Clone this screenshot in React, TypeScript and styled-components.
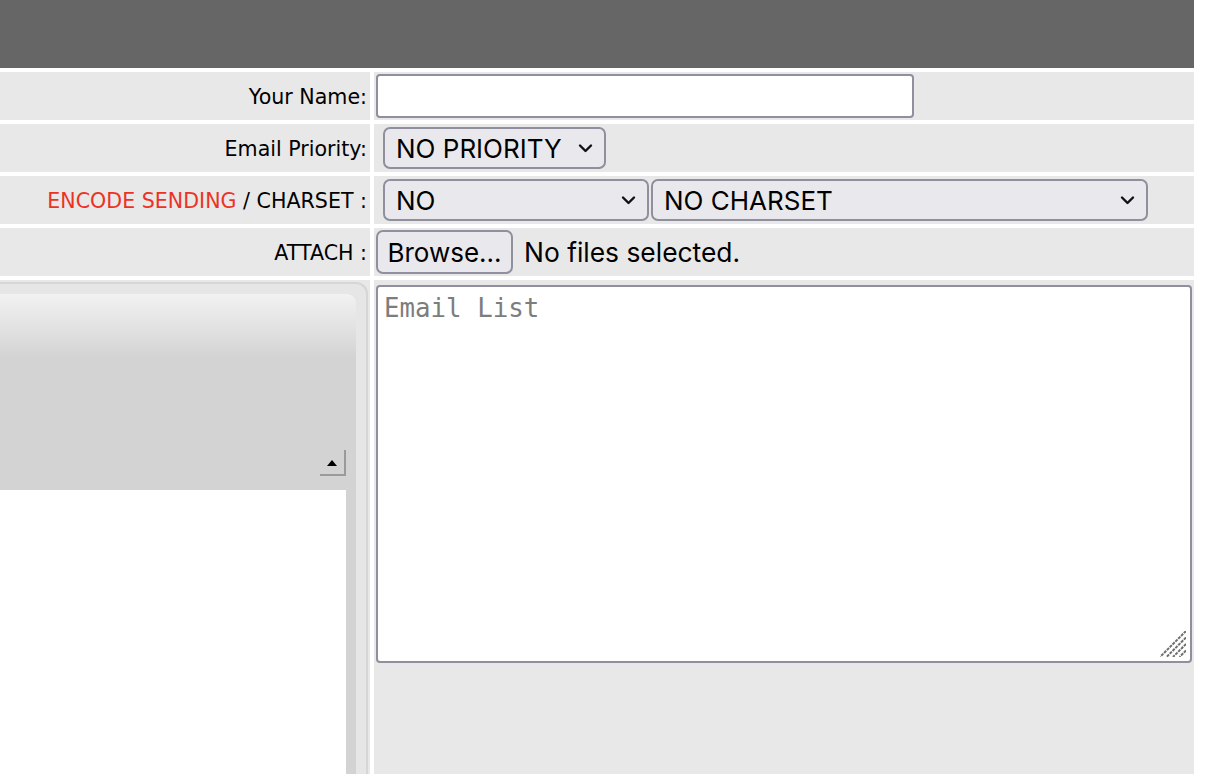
import React from 'react'
import styled, { createGlobalStyle } from 'styled-components'

const GlobalStyle = createGlobalStyle`
    html, body {
        margin: 0;
        padding: 0;
        background: #fff;
        overflow: hidden;
    }
    * {
        box-sizing: border-box;
    }
`

const Page = styled.div`
    width: 1194px;
    height: 774px;
    display: flex;
    flex-direction: column;
    background: #fff;
`

const TopBar = styled.div`
    height: 68px;
    flex-shrink: 0;
    background: #666;
`

const FormGrid = styled.div`
    flex: 1;
    display: grid;
    grid-template-columns: 370px 820px;
    grid-template-rows: 48px 48px 48px 48px 1fr;
    gap: 4px;
    padding-top: 4px;
    min-height: 0;
`

const LabelCell = styled.div`
    background: #e8e8e8;
    display: flex;
    align-items: center;
    justify-content: flex-end;
    padding: 2px 3px 0 0;
    font-family: "DejaVu Sans", Verdana, sans-serif;
    font-size: 20.6px;
    color: #000;
    white-space: nowrap;
`

const Accent = styled.span`
    color: #ec3323;
`

const FieldCell = styled.div<{ $pad?: number }>`
    background: #e8e8e8;
    display: flex;
    align-items: center;
    gap: 2px;
    padding-left: ${p => p.$pad ?? 2}px;
    font-family: Inter, "Liberation Sans", sans-serif;
    font-size: 26px;
    color: #000;
`

const TextInput = styled.input`
    width: 538px;
    height: 44px;
    border: 2px solid #8f8f9d;
    border-radius: 4px;
    background: #fff;
    outline: none;
    padding: 0 8px;
    font: inherit;
`

const SelectBox = styled.div<{ $width: number }>`
    width: ${p => p.$width}px;
    height: 42px;
    display: flex;
    align-items: center;
    justify-content: space-between;
    padding: 0 11px 0 11px;
    border: 2px solid #8f8f9d;
    border-radius: 7px;
    background: #e9e9ed;
    white-space: nowrap;
`

const FileButton = styled.button`
    height: 44px;
    width: 137px;
    border: 2px solid #8f8f9d;
    border-radius: 7px;
    background: #e9e9ed;
    font: inherit;
    color: #000;
    padding: 0;
`

const FileStatus = styled.span`
    margin-left: 9px;
    font-size: 26.4px;
`

const EditorCell = styled.div`
    background: #e8e8e8;
    display: flex;
    overflow: hidden;
`

const EditorFrame = styled.div`
    flex: 1;
    display: flex;
    flex-direction: column;
    margin: 2px 2px 0 -12px;
    padding: 10px 10px 0 0;
    border: 2px solid #d6d6d6;
    border-bottom: none;
    border-radius: 0 12px 0 0;
    background: #e6e6e6;
`

const EditorHeader = styled.div`
    height: 196px;
    flex-shrink: 0;
    display: flex;
    align-items: flex-end;
    justify-content: flex-end;
    padding: 0 10px 14px 0;
    border-radius: 0 9px 0 0;
    background: linear-gradient(#f2f2f2 0, #d3d3d3 64px, #d3d3d3 100%);
`

const ScrollUp = styled.div`
    width: 26px;
    height: 26px;
    display: flex;
    align-items: center;
    justify-content: center;
    border-right: 2px solid #9a9a9a;
    border-bottom: 2px solid #9a9a9a;
`

const EditorBody = styled.div`
    flex: 1;
    display: flex;
`

const EditorCanvas = styled.div`
    flex: 1;
    background: #fff;
`

const EditorRail = styled.div`
    width: 10px;
    background: #d3d3d3;
`

const ListCell = styled.div`
    background: #e8e8e8;
    padding: 5px 2px 0 2px;
`

const ListWrap = styled.div`
    position: relative;
    width: 816px;
    height: 378px;
`

const MailList = styled.textarea`
    width: 100%;
    height: 100%;
    border: 2px solid #8f8f9d;
    border-radius: 4px;
    padding: 6px 6px;
    resize: none;
    outline: none;
    background: #fff;
    font-family: "DejaVu Sans Mono", "Liberation Mono", monospace;
    font-size: 25.8px;
    &::placeholder {
        color: #7d7d7d;
    }
`

const Grip = styled.svg`
    position: absolute;
    right: 6px;
    bottom: 6px;
    pointer-events: none;
`

const Chevron = () => (
    <svg width="15" height="10" viewBox="0 0 15 10">
        <path d="M2 2.5 L7.5 8 L13 2.5" fill="none" stroke="#111" strokeWidth="2.4" strokeLinecap="round" strokeLinejoin="round" />
    </svg>
)

export default function App() {
    return (
        <Page>
            <GlobalStyle />
            <TopBar />
            <FormGrid>
                <LabelCell>Your Name:</LabelCell>
                <FieldCell>
                    <TextInput type="text" />
                </FieldCell>

                <LabelCell>Email Priority:</LabelCell>
                <FieldCell $pad={9}>
                    <SelectBox $width={223}>
                        <span>NO PRIORITY</span>
                        <Chevron />
                    </SelectBox>
                </FieldCell>

                <LabelCell>
                    <Accent>ENCODE SENDING</Accent>&nbsp;/ CHARSET :
                </LabelCell>
                <FieldCell $pad={9}>
                    <SelectBox $width={266}>
                        <span>NO</span>
                        <Chevron />
                    </SelectBox>
                    <SelectBox $width={497}>
                        <span>NO CHARSET</span>
                        <Chevron />
                    </SelectBox>
                </FieldCell>

                <LabelCell>ATTACH :</LabelCell>
                <FieldCell>
                    <FileButton type="button">Browse...</FileButton>
                    <FileStatus>No files selected.</FileStatus>
                </FieldCell>

                <EditorCell>
                    <EditorFrame>
                        <EditorHeader>
                            <ScrollUp>
                                <svg width="12" height="7" viewBox="0 0 12 7">
                                    <path d="M1 7 L6 1 L11 7 Z" fill="#000" />
                                </svg>
                            </ScrollUp>
                        </EditorHeader>
                        <EditorBody>
                            <EditorCanvas />
                            <EditorRail />
                        </EditorBody>
                    </EditorFrame>
                </EditorCell>
                <ListCell>
                    <ListWrap>
                        <MailList placeholder="Email List" />
                        <Grip width="26" height="26" viewBox="0 0 26 26">
                            <g stroke="#6f6f6f" strokeWidth="2" strokeDasharray="3 1">
                                <line x1="26" y1="0" x2="0" y2="26" />
                                <line x1="26" y1="6.5" x2="6.5" y2="26" />
                                <line x1="26" y1="13" x2="13" y2="26" />
                                <line x1="26" y1="19.5" x2="19.5" y2="26" />
                            </g>
                        </Grip>
                    </ListWrap>
                </ListCell>
            </FormGrid>
        </Page>
    )
}
